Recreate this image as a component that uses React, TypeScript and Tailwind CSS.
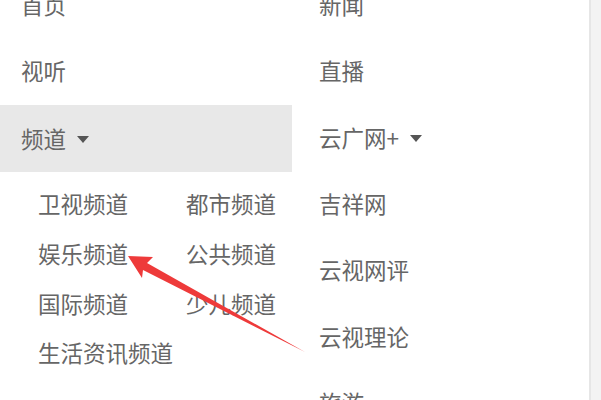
const font = { fontFamily: '"Noto Sans CJK SC", "Noto Sans", sans-serif' };

const Caret = () => (
  <svg width="12" height="7" viewBox="0 0 12 7" className="ml-[11px] mt-[2px]">
    <path d="M0 0h12L6 7z" fill="#555" />
  </svg>
);

const subItems = ['卫视频道', '都市频道', '娱乐频道', '公共频道', '国际频道', '少儿频道', '生活资讯频道'];
const rightItems = ['新闻', '直播', '云广网+', '吉祥网', '云视网评', '云视理论', '旅游'];

export default function App() {
  return (
    <div className="relative w-[601px] h-[400px] overflow-hidden bg-white text-[22.5px] text-[#666]" style={font}>
      <div className="flex h-full">
        <div className="w-[292px] -mt-[28.5px]">
          <div className="h-[66.4px] flex items-center pl-[21px]">首页</div>
          <div className="h-[66.4px] flex items-center pl-[21px]">视听</div>
          <div className="h-[66.4px] flex items-center pl-[21px] bg-[#e8e8e8] mt-[1px]">
            频道
            <Caret />
          </div>
          <div className="grid grid-cols-[148px_1fr] pl-[38px] pt-[7.5px]">
            {subItems.map((s) => (
              <div key={s} className="h-[49.7px] flex items-center whitespace-nowrap">
                {s}
              </div>
            ))}
          </div>
        </div>
        <div className="w-[297px] -mt-[28.5px] pl-[27px]">
          {rightItems.map((s, i) => (
            <div key={s} className="h-[66.4px] flex items-center">
              {s}
              {i === 2 && <Caret />}
            </div>
          ))}
        </div>
        <div className="flex-1 border-l-2 border-[#e6e6e6] bg-[#f3f3f3]" />
      </div>
      <svg className="absolute left-0 top-0 pointer-events-none" width="601" height="400">
        <polygon
          points="128,256 153,257 147,263 305,352 143,270 142,278"
          fill="#ee3a3a"
        />
      </svg>
    </div>
  );
}
